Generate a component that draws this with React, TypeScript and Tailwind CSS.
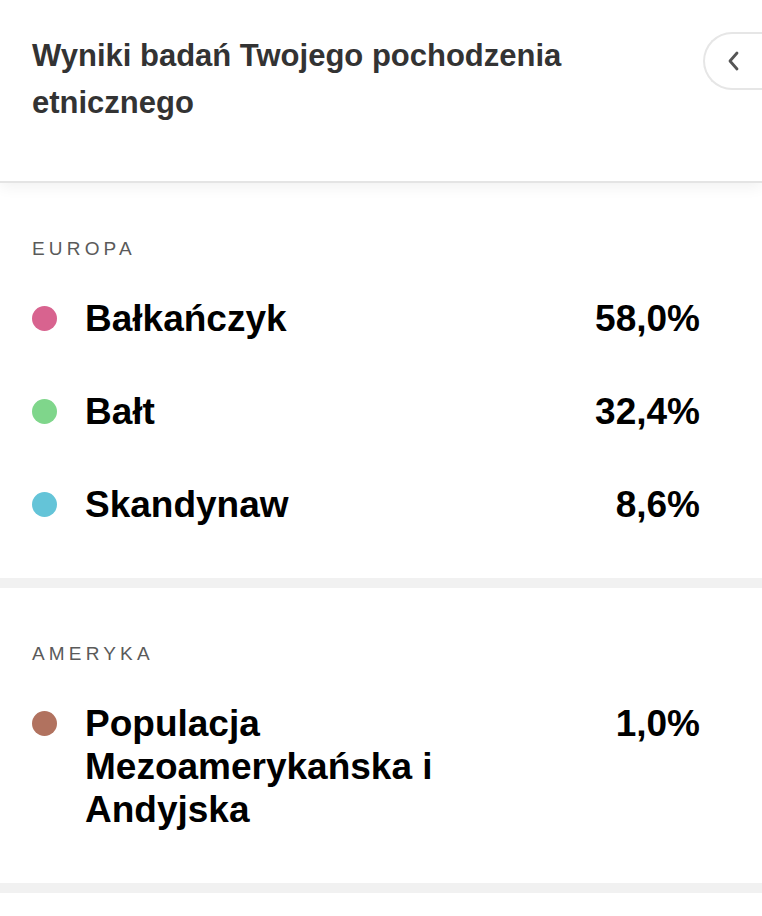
import React from "react";

type Item = { name: string; pct: string; color: string };

const sections: { title: string; items: Item[] }[] = [
  {
    title: "EUROPA",
    items: [
      { name: "Bałkańczyk", pct: "58,0%", color: "bg-[#d8638f]" },
      { name: "Bałt", pct: "32,4%", color: "bg-[#7fd68b]" },
      { name: "Skandynaw", pct: "8,6%", color: "bg-[#64c4d8]" },
    ],
  },
  {
    title: "AMERYKA",
    items: [
      { name: "Populacja Mezoamerykańska i Andyjska", pct: "1,0%", color: "bg-[#b1725f]" },
    ],
  },
];

export default function App() {
  return (
    <div className="w-[762px] min-h-[916px] bg-white overflow-hidden font-['Liberation_Sans',Arial,sans-serif]">
      <header className="relative z-10 flex h-[183px] border-b-2 border-[#e4e4e4] bg-white shadow-[0_4px_14px_rgba(0,0,0,0.06)]">
        <h1 className="flex-1 pl-[32px] pr-[30px] pt-[32px] text-[31px] leading-[47px] font-bold text-[#333]">
          Wyniki badań Twojego pochodzenia etnicznego
        </h1>
        <button className="mt-[32px] flex h-[58px] w-[59px] shrink-0 items-center rounded-l-full border-2 border-r-0 border-[#e6e6e6] pl-[22px]">
          <svg width="12" height="20" viewBox="0 0 12 20" fill="none">
            <path d="M10 2 L3 10 L10 18" stroke="#555" strokeWidth="2.8" strokeLinecap="round" strokeLinejoin="round" />
          </svg>
        </button>
      </header>
      {sections.map((s) => (
        <section key={s.title} className="border-b-[10px] border-[#f1f1f1] px-[32px] pt-[54px] pb-[52px]">
          <div className="text-[19px] leading-[24px] tracking-[0.22em] text-[#5a5a5a]">{s.title}</div>
          <div className="mt-[36px] flex flex-col gap-[50px]">
            {s.items.map((it) => (
              <div key={it.name} className="flex items-start">
                <div className="flex h-[42px] w-[53px] shrink-0 items-center">
                  <span className={`block h-[25px] w-[25px] rounded-full ${it.color}`} />
                </div>
                <div className="flex-1 text-[37px] leading-[43px] font-bold text-black">{it.name}</div>
                <div className="w-[200px] shrink-0 pr-[30px] text-right text-[37px] leading-[43px] font-bold text-black">
                  {it.pct}
                </div>
              </div>
            ))}
          </div>
        </section>
      ))}
    </div>
  );
}
